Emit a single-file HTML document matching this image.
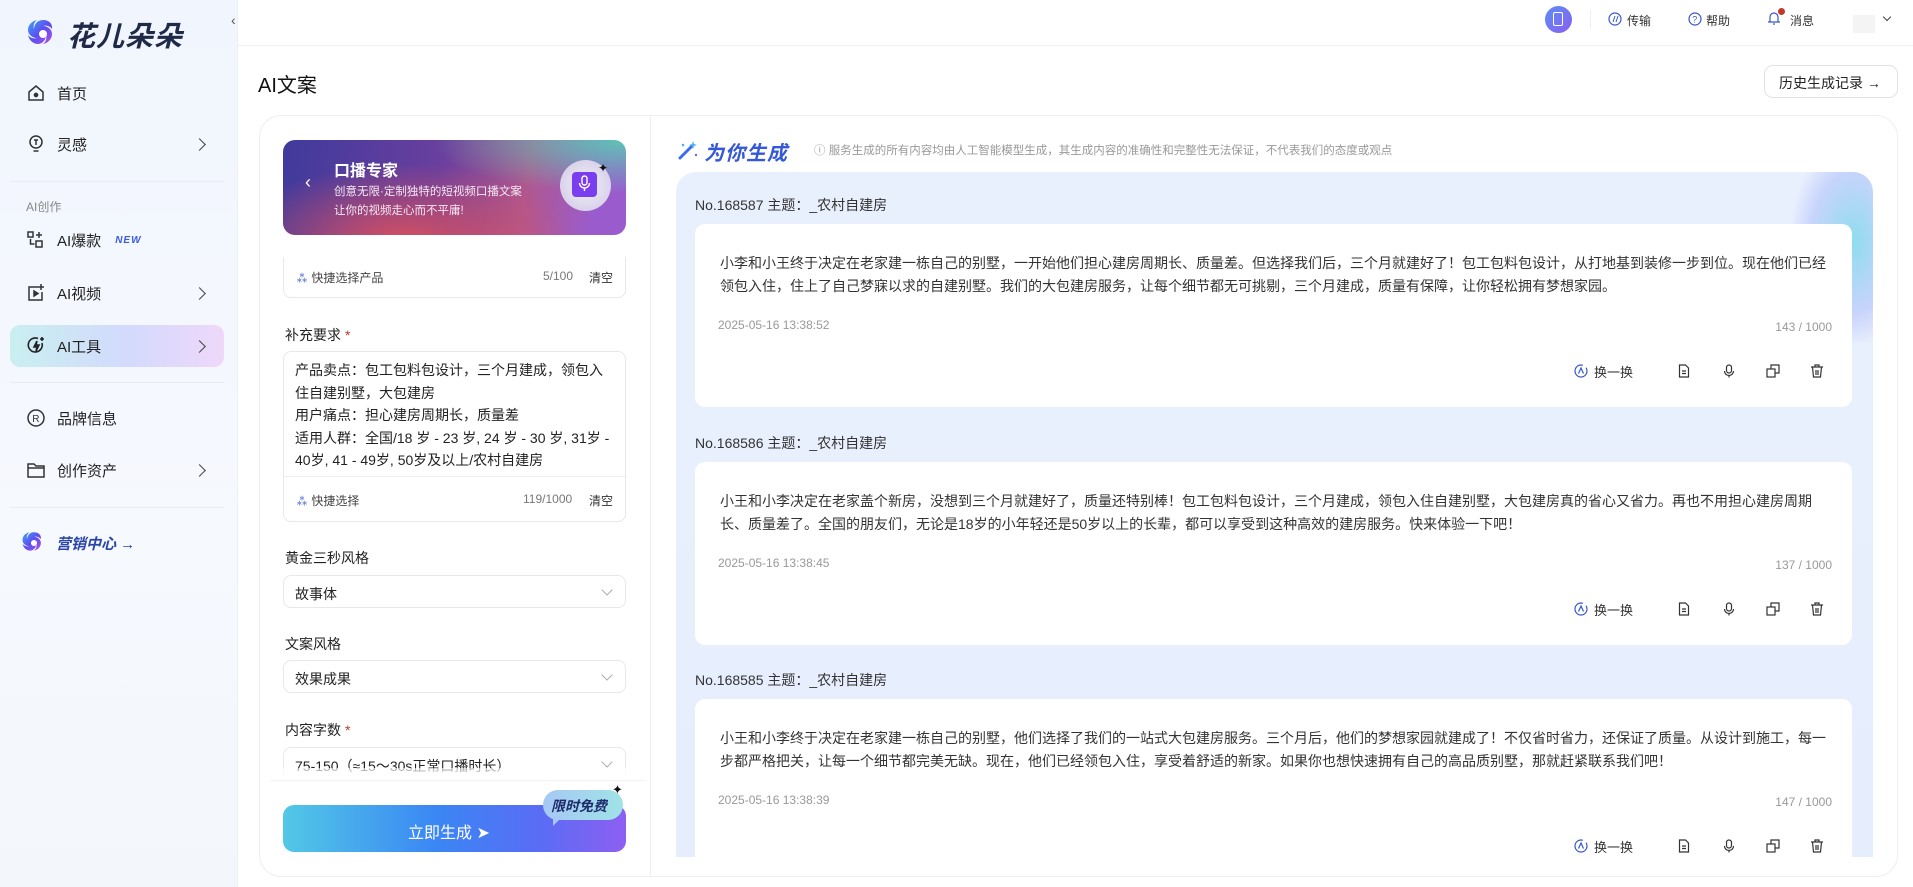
<!DOCTYPE html>
<html><head><meta charset="utf-8">
<style>
*{box-sizing:border-box;margin:0;padding:0}
body{width:1913px;height:887px;overflow:hidden;background:#fff;font-family:"Liberation Sans","Noto Sans CJK SC",sans-serif;color:#222;position:relative}
.abs{position:absolute}
.side{left:0;top:0;width:238px;height:887px;background:linear-gradient(180deg,#f1f5fd,#f6f9fe 60%,#f3f7fc);border-right:1px solid #eceff4}
.nav{position:absolute;left:10px;width:214px;height:42px;display:flex;align-items:center;padding-left:16px;font-size:15px;color:#222}
.nav .ic{width:20px;height:20px;margin-right:11px}
.nav .chev{position:absolute;right:20px;top:17px;width:9px;height:9px;border-right:1.6px solid #444;border-top:1.6px solid #444;transform:rotate(45deg)}
.div{position:absolute;left:10px;width:214px;height:1px;background:#e8edf5}
.lp{left:259px;top:115px;width:392px;height:762px;border:1px solid #eceef2;border-right:none;border-radius:22px 0 0 22px;background:#fff}
.rp{left:650px;top:115px;width:1248px;height:762px;border:1px solid #eceef2;border-left:1px solid #eceef2;border-radius:0 22px 22px 0;background:#fff}
.lbl{position:absolute;left:285px;font-size:14px;color:#222}
.lbl i{color:#c0392b;font-style:normal;margin-left:4px}
.box{position:absolute;left:283px;width:343px;border:1px solid #e6e8ec;border-radius:8px;background:#fff}
.sel{height:33px;font-size:14px;padding:8px 11px;color:#222}
.sel:after{content:"";position:absolute;right:14px;top:10px;width:7px;height:7px;border-right:1px solid #aaa;border-bottom:1px solid #aaa;transform:rotate(45deg)}
.grp{left:676px;top:172px;width:1197px;height:685px;border-radius:20px 20px 0 0;background:linear-gradient(180deg,#e9f0fd,#e6eefd);overflow:hidden}
.gh{position:absolute;left:19px;font-size:14px;color:#333}
.card{position:absolute;left:19px;width:1157px;height:183px;background:#fff;border-radius:10px}
.card p{position:absolute;left:25px;top:28px;width:1110px;font-size:14px;line-height:23px;color:#333}
.card .dt{position:absolute;left:23px;top:94px;font-size:12px;color:#999}
.card .ct{position:absolute;right:20px;top:96px;font-size:12px;color:#999}
.act{position:absolute;top:139px;right:-22px;width:300px;height:20px}
.act span{position:absolute;font-size:13px;color:#333}
.act svg{position:absolute;top:1px}
.top a{position:absolute;font-size:12px;color:#333;top:12px}
</style></head><body>

<!-- sidebar -->
<div class="abs side"></div>
<svg class="abs" style="left:26px;top:17px" width="34" height="34" viewBox="0 0 34 34"><defs><linearGradient id="lg" x1="0" y1="0" x2="1" y2="1"><stop offset="0" stop-color="#3fa7f5"/><stop offset=".5" stop-color="#5b4ff0"/><stop offset="1" stop-color="#b04fe8"/></linearGradient></defs><path d="M17 3c6 0 10 4 9 9-2-3-6-4-9-3 4 0 9 3 9 8 0 5-4 9-9 10 3-2 4-6 3-9 0 4-3 9-8 9-5 0-9-4-10-9 2 3 6 4 9 3-4 0-9-3-9-8 0-5 4-9 9-10-3 2-4 6-3 9 0-4 3-9 9-9z" fill="url(#lg)"/><circle cx="17" cy="17" r="4" fill="#fff"/></svg>
<div class="abs" style="left:67px;top:15px;font-size:28px;font-weight:bold;font-style:italic;color:#1e2a48;letter-spacing:1px">花儿朵朵</div>
<div class="abs" style="left:231px;top:12px;font-size:14px;color:#555">‹</div>

<div class="nav" style="top:72px"><svg class="ic" viewBox="0 0 20 20" fill="none" stroke="#333" stroke-width="1.5"><path d="M3 9l7-6 7 6v8H3z"/><circle cx="10" cy="12" r="1.6" fill="#333"/></svg>首页</div>
<div class="nav" style="top:123px"><svg class="ic" viewBox="0 0 20 20" fill="none" stroke="#333" stroke-width="1.5"><circle cx="10" cy="8" r="6"/><path d="M7.5 17h5M8 6h4M10 6v5"/></svg>灵感<span class="chev"></span></div>
<div class="div" style="top:181px"></div>
<div class="abs" style="left:26px;top:198px;font-size:12px;color:#888">AI创作</div>
<div class="nav" style="top:219px"><svg class="ic" viewBox="0 0 20 20" fill="none" stroke="#333" stroke-width="1.5"><rect x="2" y="2" width="5" height="5"/><rect x="10" y="11" width="6" height="6"/><path d="M4.5 9v5h4M13 2v6M10 5h6"/></svg>AI爆款<span style="margin-left:14px;font-size:10px;font-weight:bold;font-style:italic;color:#3b5bdb;letter-spacing:1px">NEW</span></div>
<div class="nav" style="top:272px"><svg class="ic" viewBox="0 0 20 20" fill="none" stroke="#333" stroke-width="1.5"><path d="M12 4H3v13h13V9"/><path d="M8 8l4 2.5L8 13z" fill="#333"/><path d="M15 1v6M12 4h6"/></svg>AI视频<span class="chev"></span></div>
<div class="nav" style="top:325px;border-radius:10px;background:linear-gradient(90deg,#c9eff0,#d3dafd 55%,#efd8fa)"><svg class="ic" viewBox="0 0 20 20" fill="none" stroke="#222" stroke-width="1.6"><path d="M16 7a7 7 0 1 1-4-4.5"/><path d="M11 5l-3 6h3l-1 4 3-6h-3z" fill="#222"/><path d="M16 1v4M14 3h4"/></svg>AI工具<span class="chev"></span></div>
<div class="div" style="top:382px"></div>
<div class="nav" style="top:397px"><svg class="ic" viewBox="0 0 20 20" fill="none" stroke="#333" stroke-width="1.5"><circle cx="10" cy="10" r="8"/><text x="6.3" y="14" font-size="10" fill="#333" stroke="none" font-family="Liberation Sans">R</text></svg>品牌信息</div>
<div class="nav" style="top:449px"><svg class="ic" viewBox="0 0 20 20" fill="none" stroke="#333" stroke-width="1.5"><path d="M2 4h6l2 2h8v11H2z"/><path d="M2 8h16"/></svg>创作资产<span class="chev"></span></div>
<div class="div" style="top:507px"></div>
<svg class="abs" style="left:21px;top:530px" width="26" height="26" viewBox="0 0 34 34"><path d="M17 3c6 0 10 4 9 9-2-3-6-4-9-3 4 0 9 3 9 8 0 5-4 9-9 10 3-2 4-6 3-9 0 4-3 9-8 9-5 0-9-4-10-9 2 3 6 4 9 3-4 0-9-3-9-8 0-5 4-9 9-10-3 2-4 6-3 9 0-4 3-9 9-9z" fill="url(#lg)"/><circle cx="17" cy="17" r="4" fill="#fff"/></svg>
<div class="abs" style="left:56px;top:533px;font-size:15px;font-weight:bold;font-style:italic;color:#2b44a8">营销中心 <span style="font-weight:normal;font-style:normal">→</span></div>

<!-- top bar -->
<div class="abs" style="left:238px;top:45px;width:1675px;height:1px;background:#eef0f3"></div>
<div class="abs" style="left:1545px;top:6px;width:27px;height:27px;border-radius:50%;background:linear-gradient(135deg,#5b8ef5,#8a5ef0)"></div>
<div class="abs" style="left:1553px;top:12px;width:10px;height:14px;border:1.5px solid #fff;border-radius:2px"></div>
<div class="abs" style="left:1590px;top:10px;width:1px;height:18px;background:#eee"></div>
<div class="top">
<svg class="abs" style="left:1608px;top:12px" width="14" height="14"><circle cx="7" cy="7" r="6" fill="none" stroke="#3557c9" stroke-width="1.2"/><path d="M5 10l2-6M8 10l2-6" stroke="#3557c9"/></svg><a style="left:1627px">传输</a>
<svg class="abs" style="left:1688px;top:12px" width="14" height="14"><circle cx="7" cy="7" r="6" fill="none" stroke="#3557c9" stroke-width="1.2"/><text x="4.3" y="10.5" font-size="9" fill="#3557c9" font-family="Liberation Sans">?</text></svg><a style="left:1706px">帮助</a>
<svg class="abs" style="left:1767px;top:10px" width="14" height="16"><path d="M3 12V7a4 4 0 0 1 8 0v5zM1 12h12M6 14h2" fill="none" stroke="#3557c9" stroke-width="1.2"/></svg>
<div class="abs" style="left:1778px;top:8px;width:7px;height:7px;border-radius:50%;background:#c0392b"></div><a style="left:1790px">消息</a>
<div class="abs" style="left:1853px;top:15px;width:22px;height:18px;background:#f4f4f4"></div>
<div class="abs" style="left:1884px;top:14px;width:6px;height:6px;border-right:1px solid #444;border-bottom:1px solid #444;transform:rotate(45deg)"></div>
</div>

<div class="abs" style="left:258px;top:69px;font-size:20px;color:#111">AI文案</div>
<div class="abs" style="left:1764px;top:65px;width:134px;height:33px;border:1px solid #e0e2e6;border-radius:9px;font-size:14px;padding:7px 0 0 14px;color:#222">历史生成记录 →</div>

<!-- left panel -->
<div class="abs lp"></div>
<div class="abs" style="left:283px;top:140px;width:343px;height:95px;border-radius:12px;background:radial-gradient(ellipse at 100% 0%,#5fc3b5 0,rgba(95,195,181,0) 40%),radial-gradient(ellipse at 35% 110%,#d9505e 0,rgba(217,80,94,0) 55%),linear-gradient(100deg,#3f3a9c,#6a3f9e 45%,#b0578f 70%,#9a5ccc 90%)"></div>
<div class="abs" style="left:305px;top:172px;font-size:18px;color:#fff">‹</div>
<div class="abs" style="left:334px;top:157px;font-size:16px;font-weight:bold;color:#fff">口播专家</div>
<div class="abs" style="left:334px;top:183px;font-size:11.5px;color:#f4e8f4;line-height:19px">创意无限·定制独特的短视频口播文案<br>让你的视频走心而不平庸!</div>
<div class="abs" style="left:560px;top:160px;width:51px;height:51px;border-radius:50%;background:radial-gradient(circle,#f2f0f6,#cfc6e6)"></div>
<div class="abs" style="left:572px;top:172px;width:25px;height:25px;border-radius:4px;background:#7a3ef0"></div>
<svg class="abs" style="left:577px;top:175px" width="15" height="19"><rect x="5" y="1" width="5" height="9" rx="2.5" fill="none" stroke="#fff" stroke-width="1.4"/><path d="M2.5 8a5 5 0 0 0 10 0M7.5 13v3" fill="none" stroke="#fff" stroke-width="1.4"/></svg>
<div class="abs" style="left:598px;top:161px;font-size:12px;color:#111">✦</div>

<div class="box" style="top:257px;height:41px;border-top:none;border-radius:0 0 8px 8px"></div>
<div class="abs" style="left:296px;top:269px;font-size:12px;color:#444"><span style="color:#3557c9">⁂</span> 快捷选择产品</div>
<div class="abs" style="left:543px;top:269px;font-size:12px;color:#777">5/100</div>
<div class="abs" style="left:589px;top:269px;font-size:12px;color:#333">清空</div>

<div class="lbl" style="top:325px">补充要求<i>*</i></div>
<div class="box" style="top:351px;height:171px"></div>
<div class="abs" style="left:295px;top:359px;width:320px;font-size:14px;line-height:22.5px;color:#222">产品卖点：包工包料包设计，三个月建成，领包入住自建别墅，大包建房<br>用户痛点：担心建房周期长，质量差<br>适用人群：全国/18 岁 - 23 岁, 24 岁 - 30 岁, 31岁 - 40岁, 41 - 49岁, 50岁及以上/农村自建房</div>
<div class="abs" style="left:284px;top:476px;width:341px;height:1px;background:#eee"></div>
<div class="abs" style="left:296px;top:492px;font-size:12px;color:#444"><span style="color:#3557c9">⁂</span> 快捷选择</div>
<div class="abs" style="left:523px;top:492px;font-size:12px;color:#777">119/1000</div>
<div class="abs" style="left:589px;top:492px;font-size:12px;color:#333">清空</div>

<div class="lbl" style="top:548px">黄金三秒风格</div>
<div class="box sel" style="top:575px">故事体</div>
<div class="lbl" style="top:634px">文案风格</div>
<div class="box sel" style="top:660px">效果成果</div>
<div class="lbl" style="top:720px">内容字数<i>*</i></div>
<div class="box sel" style="top:747px;height:28px;border-bottom:none;border-radius:8px 8px 0 0;overflow:hidden">75-150（≈15～30s正常口播时长）</div>
<div class="abs" style="left:265px;top:768px;width:380px;height:14px;background:linear-gradient(180deg,rgba(255,255,255,.6),#fff)"></div>
<div class="abs" style="left:270px;top:780px;width:375px;height:1px;background:#f0f2f5"></div>
<div class="abs" style="left:283px;top:805px;width:343px;height:47px;border-radius:11px;background:linear-gradient(90deg,#52c8e6,#3a86f4 45%,#5a6cf5 75%,#8d5ff2)"></div>
<div class="abs" style="left:408px;top:819px;font-size:16px;color:#fff">立即生成 ➤</div>
<div class="abs" style="left:543px;top:790px;width:80px;height:30px;border-radius:15px;background:linear-gradient(90deg,#a7c8f5,#9fe3e6)"></div>
<div class="abs" style="left:553px;top:816px;width:0;height:0;border-left:10px solid #a7c8f5;border-bottom:10px solid transparent"></div>
<div class="abs" style="left:551px;top:796px;font-size:14px;font-weight:bold;font-style:italic;color:#1e2a6a">限时免费</div>
<div class="abs" style="left:612px;top:782px;font-size:13px;color:#111">✦</div>

<!-- right panel -->
<div class="abs rp"></div>
<svg class="abs" style="left:677px;top:139px" width="22" height="22"><path d="M3 19L14 8" stroke="#3b6cf0" stroke-width="3" stroke-linecap="round"/><path d="M16 2l1 3 3 1-3 1-1 3-1-3-3-1 3-1z" fill="#4ab0f0"/><circle cx="6" cy="6" r="1.3" fill="#4ab0f0"/><circle cx="19" cy="16" r="1.2" fill="#7a5ef0"/></svg>
<div class="abs" style="left:704px;top:137px;font-size:20px;font-weight:bold;font-style:italic;color:#3558d8;letter-spacing:1px">为你生成</div>
<div class="abs" style="left:814px;top:142px;font-size:11.5px;color:#999">ⓘ 服务生成的所有内容均由人工智能模型生成，其生成内容的准确性和完整性无法保证，不代表我们的态度或观点</div>

<div class="abs grp">
  <div style="position:absolute;right:-40px;top:-30px;width:120px;height:200px;background:radial-gradient(ellipse,rgba(120,215,235,.8),rgba(150,170,250,.4) 50%,rgba(230,238,253,0) 75%)"></div>
  <div class="gh" style="top:23px">No.168587 主题：_农村自建房</div>
  <div class="card" style="top:52px">
    <p>小李和小王终于决定在老家建一栋自己的别墅，一开始他们担心建房周期长、质量差。但选择我们后，三个月就建好了！包工包料包设计，从打地基到装修一步到位。现在他们已经领包入住，住上了自己梦寐以求的自建别墅。我们的大包建房服务，让每个细节都无可挑剔，三个月建成，质量有保障，让你轻松拥有梦想家园。</p>
    <div class="dt">2025-05-16 13:38:52</div><div class="ct">143 / 1000</div>
    <div class="act">
      <svg style="left:0" width="14" height="14"><circle cx="7" cy="7" r="6" fill="none" stroke="#3557c9" stroke-width="1.2" stroke-dasharray="30 4"/><path d="M4.5 9.5L7 4l2.5 5.5" fill="none" stroke="#3557c9" stroke-width="1.2"/></svg><span style="left:20px;top:-1px">换一换</span>
      <svg style="left:103px" width="14" height="14" fill="none" stroke="#333" stroke-width="1.2"><path d="M2.5 1h6l3 3v9h-9z"/><path d="M5 7h4M5 9.5h4"/></svg>
      <svg style="left:148px" width="14" height="14" fill="none" stroke="#333" stroke-width="1.2"><rect x="4.5" y="1" width="5" height="8" rx="2.5"/><path d="M2.5 7a4.5 4.5 0 0 0 9 0M7 11.5v2"/></svg>
      <svg style="left:192px" width="14" height="14" fill="none" stroke="#333" stroke-width="1.2"><rect x="1" y="5" width="8" height="8"/><path d="M5 5V1h8v8H9"/></svg>
      <svg style="left:236px" width="14" height="14" fill="none" stroke="#333" stroke-width="1.2"><path d="M1 3h12M5 3V1h4v2M2.5 3l1 10h7l1-10M6 6v5M8 6v5"/></svg>
    </div>
  </div>
  <div class="gh" style="top:261px">No.168586 主题：_农村自建房</div>
  <div class="card" style="top:290px">
    <p>小王和小李决定在老家盖个新房，没想到三个月就建好了，质量还特别棒！包工包料包设计，三个月建成，领包入住自建别墅，大包建房真的省心又省力。再也不用担心建房周期长、质量差了。全国的朋友们，无论是18岁的小年轻还是50岁以上的长辈，都可以享受到这种高效的建房服务。快来体验一下吧！</p>
    <div class="dt">2025-05-16 13:38:45</div><div class="ct">137 / 1000</div>
    <div class="act">
      <svg style="left:0" width="14" height="14"><circle cx="7" cy="7" r="6" fill="none" stroke="#3557c9" stroke-width="1.2" stroke-dasharray="30 4"/><path d="M4.5 9.5L7 4l2.5 5.5" fill="none" stroke="#3557c9" stroke-width="1.2"/></svg><span style="left:20px;top:-1px">换一换</span>
      <svg style="left:103px" width="14" height="14" fill="none" stroke="#333" stroke-width="1.2"><path d="M2.5 1h6l3 3v9h-9z"/><path d="M5 7h4M5 9.5h4"/></svg>
      <svg style="left:148px" width="14" height="14" fill="none" stroke="#333" stroke-width="1.2"><rect x="4.5" y="1" width="5" height="8" rx="2.5"/><path d="M2.5 7a4.5 4.5 0 0 0 9 0M7 11.5v2"/></svg>
      <svg style="left:192px" width="14" height="14" fill="none" stroke="#333" stroke-width="1.2"><rect x="1" y="5" width="8" height="8"/><path d="M5 5V1h8v8H9"/></svg>
      <svg style="left:236px" width="14" height="14" fill="none" stroke="#333" stroke-width="1.2"><path d="M1 3h12M5 3V1h4v2M2.5 3l1 10h7l1-10M6 6v5M8 6v5"/></svg>
    </div>
  </div>
  <div class="gh" style="top:498px">No.168585 主题：_农村自建房</div>
  <div class="card" style="top:527px">
    <p>小王和小李终于决定在老家建一栋自己的别墅，他们选择了我们的一站式大包建房服务。三个月后，他们的梦想家园就建成了！不仅省时省力，还保证了质量。从设计到施工，每一步都严格把关，让每一个细节都完美无缺。现在，他们已经领包入住，享受着舒适的新家。如果你也想快速拥有自己的高品质别墅，那就赶紧联系我们吧！</p>
    <div class="dt">2025-05-16 13:38:39</div><div class="ct">147 / 1000</div>
    <div class="act">
      <svg style="left:0" width="14" height="14"><circle cx="7" cy="7" r="6" fill="none" stroke="#3557c9" stroke-width="1.2" stroke-dasharray="30 4"/><path d="M4.5 9.5L7 4l2.5 5.5" fill="none" stroke="#3557c9" stroke-width="1.2"/></svg><span style="left:20px;top:-1px">换一换</span>
      <svg style="left:103px" width="14" height="14" fill="none" stroke="#333" stroke-width="1.2"><path d="M2.5 1h6l3 3v9h-9z"/><path d="M5 7h4M5 9.5h4"/></svg>
      <svg style="left:148px" width="14" height="14" fill="none" stroke="#333" stroke-width="1.2"><rect x="4.5" y="1" width="5" height="8" rx="2.5"/><path d="M2.5 7a4.5 4.5 0 0 0 9 0M7 11.5v2"/></svg>
      <svg style="left:192px" width="14" height="14" fill="none" stroke="#333" stroke-width="1.2"><rect x="1" y="5" width="8" height="8"/><path d="M5 5V1h8v8H9"/></svg>
      <svg style="left:236px" width="14" height="14" fill="none" stroke="#333" stroke-width="1.2"><path d="M1 3h12M5 3V1h4v2M2.5 3l1 10h7l1-10M6 6v5M8 6v5"/></svg>
    </div>
  </div>
</div>
</body></html>
